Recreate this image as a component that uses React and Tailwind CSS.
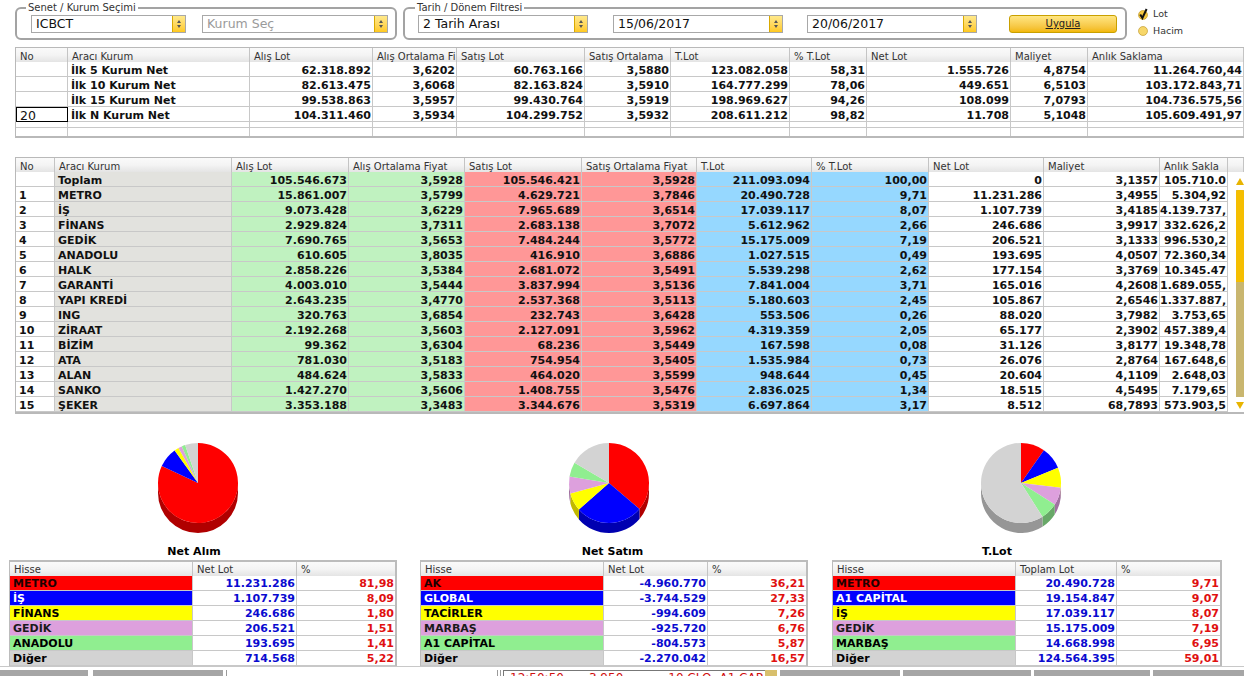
const HEAD_A = 'grid grid-cols-[52px_182px_123px_84px_128px_86px_119px_77px_144px_77px_156px]';
const HEAD_B = 'grid grid-cols-[39px_177px_117px_116px_117px_115px_115px_117px_115px_116px_68px_16px]';

const topCols = ['No', 'Aracı Kurum', 'Alış Lot', 'Alış Ortalama Fi', 'Satış Lot', 'Satış Ortalama', 'T.Lot', '% T.Lot', 'Net Lot', 'Maliyet', 'Anlık Saklama'];
const topRows = [
  ['', 'İlk 5 Kurum Net', '62.318.892', '3,6202', '60.763.166', '3,5880', '123.082.058', '58,31', '1.555.726', '4,8754', '11.264.760,44'],
  ['', 'İlk 10 Kurum Net', '82.613.475', '3,6068', '82.163.824', '3,5910', '164.777.299', '78,06', '449.651', '6,5103', '103.172.843,71'],
  ['', 'İlk 15 Kurum Net', '99.538.863', '3,5957', '99.430.764', '3,5919', '198.969.627', '94,26', '108.099', '7,0793', '104.736.575,56'],
  ['20', 'İlk N Kurum Net', '104.311.460', '3,5934', '104.299.752', '3,5932', '208.611.212', '98,82', '11.708', '5,1048', '105.609.491,97'],
];

const mainCols = ['No', 'Aracı Kurum', 'Alış Lot', 'Alış Ortalama Fiyat', 'Satış Lot', 'Satış Ortalama Fiyat', 'T.Lot', '% T.Lot', 'Net Lot', 'Maliyet', 'Anlık Sakla', ''];
const mainRows = [
  ['', 'Toplam', '105.546.673', '3,5928', '105.546.421', '3,5928', '211.093.094', '100,00', '0', '3,1357', '105.710.0'],
  ['1', 'METRO', '15.861.007', '3,5799', '4.629.721', '3,7846', '20.490.728', '9,71', '11.231.286', '3,4955', '5.304,92'],
  ['2', 'İŞ', '9.073.428', '3,6229', '7.965.689', '3,6514', '17.039.117', '8,07', '1.107.739', '3,4185', '4.139.737,'],
  ['3', 'FİNANS', '2.929.824', '3,7311', '2.683.138', '3,7072', '5.612.962', '2,66', '246.686', '3,9917', '332.626,2'],
  ['4', 'GEDİK', '7.690.765', '3,5653', '7.484.244', '3,5772', '15.175.009', '7,19', '206.521', '3,1333', '996.530,2'],
  ['5', 'ANADOLU', '610.605', '3,8035', '416.910', '3,6886', '1.027.515', '0,49', '193.695', '4,0507', '72.360,34'],
  ['6', 'HALK', '2.858.226', '3,5384', '2.681.072', '3,5491', '5.539.298', '2,62', '177.154', '3,3769', '10.345.47'],
  ['7', 'GARANTİ', '4.003.010', '3,5444', '3.837.994', '3,5136', '7.841.004', '3,71', '165.016', '4,2608', '1.689.055,'],
  ['8', 'YAPI KREDİ', '2.643.235', '3,4770', '2.537.368', '3,5113', '5.180.603', '2,45', '105.867', '2,6546', '1.337.887,'],
  ['9', 'ING', '320.763', '3,6854', '232.743', '3,6428', '553.506', '0,26', '88.020', '3,7982', '3.753,65'],
  ['10', 'ZİRAAT', '2.192.268', '3,5603', '2.127.091', '3,5962', '4.319.359', '2,05', '65.177', '2,3902', '457.389,4'],
  ['11', 'BİZİM', '99.362', '3,6304', '68.236', '3,5449', '167.598', '0,08', '31.126', '3,8177', '19.348,78'],
  ['12', 'ATA', '781.030', '3,5183', '754.954', '3,5405', '1.535.984', '0,73', '26.076', '2,8764', '167.648,6'],
  ['13', 'ALAN', '484.624', '3,5833', '464.020', '3,5599', '948.644', '0,45', '20.604', '4,1109', '2.648,03'],
  ['14', 'SANKO', '1.427.270', '3,5606', '1.408.755', '3,5476', '2.836.025', '1,34', '18.515', '4,5495', '7.179,65'],
  ['15', 'ŞEKER', '3.353.188', '3,3483', '3.344.676', '3,5319', '6.697.864', '3,17', '8.512', '68,7893', '573.903,5'],
];

const mainBg = ['', 'bg-[#e2e2de]', 'bg-[#c0f2c0]', 'bg-[#c0f2c0]', 'bg-[#ff9797]', 'bg-[#ff9797]', 'bg-[#96d8ff]', 'bg-[#96d8ff]', '', '', ''];

const swatches = [
  { bg: 'bg-[#ff0000]', text: 'text-[#1c0000]', top: '#ff0000', side: '#b00000' },
  { bg: 'bg-[#0000ff]', text: 'text-white', top: '#0000ff', side: '#0000b0' },
  { bg: 'bg-[#ffff00]', text: 'text-black', top: '#ffff00', side: '#c0b800' },
  { bg: 'bg-[#dda0dd]', text: 'text-[#1a1a1a]', top: '#dda0dd', side: '#a070a0' },
  { bg: 'bg-[#90ee90]', text: 'text-black', top: '#90ee90', side: '#68a868' },
  { bg: 'bg-[#d3d3d3]', text: 'text-black', top: '#d3d3d3', side: '#969696' },
];

const charts = [
  {
    title: 'Net Alım',
    lotHead: 'Net Lot',
    wrap: 'ml-[9px] w-[388px]',
    cols: 'grid-cols-[183px_104px_1fr]',
    titleBox: 'w-[370px]',
    rows: [
      ['METRO', '11.231.286', '81,98'],
      ['İŞ', '1.107.739', '8,09'],
      ['FİNANS', '246.686', '1,80'],
      ['GEDİK', '206.521', '1,51'],
      ['ANADOLU', '193.695', '1,41'],
      ['Diğer', '714.568', '5,22'],
    ],
  },
  {
    title: 'Net Satım',
    lotHead: 'Net Lot',
    wrap: 'ml-[23px] w-[388px]',
    cols: 'grid-cols-[183px_104px_1fr]',
    titleBox: 'w-[385px]',
    rows: [
      ['AK', '-4.960.770', '36,21'],
      ['GLOBAL', '-3.744.529', '27,33'],
      ['TACİRLER', '-994.609', '7,26'],
      ['MARBAŞ', '-925.720', '6,76'],
      ['A1 CAPİTAL', '-804.573', '5,87'],
      ['Diğer', '-2.270.042', '16,57'],
    ],
  },
  {
    title: 'T.Lot',
    lotHead: 'Toplam Lot',
    wrap: 'ml-[24px] w-[390px]',
    cols: 'grid-cols-[183px_101px_1fr]',
    titleBox: 'w-[330px]',
    rows: [
      ['METRO', '20.490.728', '9,71'],
      ['A1 CAPİTAL', '19.154.847', '9,07'],
      ['İŞ', '17.039.117', '8,07'],
      ['GEDİK', '15.175.009', '7,19'],
      ['MARBAŞ', '14.668.998', '6,95'],
      ['Diğer', '124.564.395', '59,01'],
    ],
  },
];

function point(cx, cy, r, deg) {
  const a = ((deg - 90) * Math.PI) / 180;
  return [cx + r * Math.cos(a), cy + r * Math.sin(a)];
}

function Pie({ values }) {
  const cx = 50;
  const cy = 41;
  const r = 40;
  const depth = 10;
  let from = 0;
  const slices = values.map((v, i) => {
    const to = from + v * 3.6;
    const s = { from, to, color: swatches[i] };
    from = to;
    return s;
  });

  return (
    <svg width="100" height="94" viewBox="0 0 100 94">
      {slices.map((s, i) => {
        // only the front half of the rim shows
        const a = Math.max(s.from, 90);
        const b = Math.min(s.to, 270);
        if (b <= a) return null;
        const [x1, y1] = point(cx, cy, r, a);
        const [x2, y2] = point(cx, cy, r, b);
        const d = `M${x1} ${y1}A${r} ${r} 0 0 1 ${x2} ${y2}L${x2} ${y2 + depth}A${r} ${r} 0 0 0 ${x1} ${y1 + depth}Z`;
        return <path key={i} d={d} fill={s.color.side} />;
      })}
      {slices.map((s, i) => {
        const [x1, y1] = point(cx, cy, r, s.from);
        const [x2, y2] = point(cx, cy, r, s.to);
        const large = s.to - s.from > 180 ? 1 : 0;
        return (
          <path
            key={i}
            d={`M${cx} ${cy}L${x1} ${y1}A${r} ${r} 0 ${large} 1 ${x2} ${y2}Z`}
            fill={s.color.top}
          />
        );
      })}
    </svg>
  );
}

function SelectBox({ value, muted, width }) {
  return (
    <div className={`flex h-[18px] border border-[#a8a8a8] bg-white ${width}`}>
      <div className={`flex-1 overflow-hidden whitespace-nowrap pl-[4px] text-[12.5px] leading-[16px] ${muted ? 'text-[#9a9a9a]' : 'text-[#111]'}`}>
        {value}
      </div>
      <div className="flex w-[13px] flex-col items-center justify-center gap-[2px] border-l border-[#d9a900] bg-gradient-to-b from-[#ffe98a] to-[#ffc91a]">
        <span className="h-0 w-0 border-x-[2.5px] border-b-[3px] border-x-transparent border-b-[#555]"></span>
        <span className="h-0 w-0 border-x-[2.5px] border-t-[3px] border-x-transparent border-t-[#555]"></span>
      </div>
    </div>
  );
}

function HeadCell({ children, last, leading = 'leading-[15px]' }) {
  return (
    <div className={`overflow-hidden whitespace-nowrap pl-[4px] text-[10px] text-[#333] ${leading} ${last ? '' : 'border-r border-[#c4c4c4]'}`}>
      {children}
    </div>
  );
}

function Cell({ children, left, bg, className = '', leading = 'leading-[15px]' }) {
  return (
    <div
      className={`h-[15px] overflow-hidden whitespace-nowrap border-r border-b border-[#c8c8c8] text-[11px] font-bold ${leading} ${left ? 'pl-[3px] text-left' : 'pr-[1px] text-right'} ${bg || ''} ${className}`}
    >
      {children}
    </div>
  );
}

const headBg = 'bg-gradient-to-b from-[#fafafa] via-[#f4f4f4] to-[#e4e4e4]';

function TopTable() {
  return (
    <div className="mt-[7px] ml-[15px] h-[91px] border-t border-b-2 border-l border-[#b9b9b9] bg-white">
      <div className={`${HEAD_A} h-[14px] ${headBg}`}>
        {topCols.map((c) => (
          <HeadCell key={c} leading="leading-[18px]">{c}</HeadCell>
        ))}
      </div>
      {topRows.map((row) => (
        <div key={row[1]} className={HEAD_A}>
          {row.map((v, i) =>
            i === 0 && v ? (
              <div key={i} className="h-[15px] border border-black pl-[3px] text-[12.5px] leading-[15px] text-[#111]">
                {v}
              </div>
            ) : (
              <Cell key={i} left={i < 2} leading="leading-[17px]" className="text-[#111]">
                {v}
              </Cell>
            )
          )}
        </div>
      ))}
      <div className={`${HEAD_A} h-[6px]`}>
        {topCols.map((c) => (
          <div key={c} className="border-r border-b border-[#c8c8c8]"></div>
        ))}
      </div>
      <div className={`${HEAD_A} h-[8px]`}>
        {topCols.map((c) => (
          <div key={c} className="border-r border-[#c8c8c8]"></div>
        ))}
      </div>
    </div>
  );
}

function MainTable() {
  return (
    <div className="mt-[19px] ml-[15px] h-[257px] border-t border-b-2 border-l border-[#b9b9b9] bg-white">
      <div className={`${HEAD_B} h-[14px] ${headBg}`}>
        {mainCols.map((c, i) => (
          <HeadCell key={i} leading="leading-[17px]">{c}</HeadCell>
        ))}
      </div>
      <div className="flex">
        <div className="w-[1212px]">
          {mainRows.map((row) => (
            <div key={row[1]} className="grid grid-cols-[39px_177px_117px_116px_117px_115px_115px_117px_115px_116px_68px]">
              {row.map((v, i) => (
                <Cell key={i} left={i < 2} bg={mainBg[i]} leading="leading-[17px]" className="text-[#111]">
                  {v}
                </Cell>
              ))}
            </div>
          ))}
        </div>
        <div className="ml-[8px] flex h-[240px] w-[8px] flex-col pt-[6px]">
          <span className="h-0 w-0 border-x-[4px] border-b-[7px] border-x-transparent border-b-[#e8b400]"></span>
          <div className="mt-[5px] flex flex-1 flex-col bg-[#c9b66f]">
            <div className="h-[92px] rounded-t-[2px] bg-[#f5be00]"></div>
          </div>
          <span className="mt-[5px] mb-[3px] h-0 w-0 border-x-[4px] border-t-[7px] border-x-transparent border-t-[#e8b400]"></span>
        </div>
      </div>
    </div>
  );
}

function ChartBlock({ chart }) {
  return (
    <div className={chart.wrap}>
      <div className="flex h-[131px] w-[378px] justify-center pt-[28px]">
        <Pie values={chart.rows.map((r) => parseFloat(r[2].replace(',', '.')))} />
      </div>
      <div className={`${chart.titleBox} text-center text-[11px] leading-[14px] font-bold text-black`}>{chart.title}</div>
      <div className="mt-[1px] border-t-2 border-r-2 border-l border-[#bcbcbc] bg-white">
        <div className={`grid ${chart.cols} h-[14px] ${headBg}`}>
          <HeadCell>Hisse</HeadCell>
          <HeadCell>{chart.lotHead}</HeadCell>
          <HeadCell last>%</HeadCell>
        </div>
        {chart.rows.map((r, i) => (
          <div key={r[0]} className={`grid ${chart.cols}`}>
            <Cell left bg={swatches[i].bg} className={swatches[i].text}>
              {r[0]}
            </Cell>
            <Cell className="text-[#0a0ad0]">{r[1]}</Cell>
            <Cell className="border-r-0 text-[#e01010]">{r[2]}</Cell>
          </div>
        ))}
      </div>
    </div>
  );
}

function BottomBar() {
  return (
    <div className="flex h-[10px] items-stretch overflow-hidden border-t border-[#c8c8c8] pt-[3px]">
      <div className="w-[88px] bg-[#a6a6a6]"></div>
      <div className="ml-[5px] w-[130px] bg-[#a6a6a6]"></div>
      <div className="ml-[3px] w-[1px] bg-[#9a9a9a]"></div>
      <div className="w-[270px]"></div>
      <div className="w-[1px] bg-[#9a9a9a]"></div>
      <div className="ml-[2px] w-[1px] bg-[#9a9a9a]"></div>
      <div className="ml-[2px] flex w-[262px] overflow-hidden border-t border-l border-[#777] pt-[1px] text-[12px] leading-[13px] whitespace-nowrap text-[#d01010]">
        <span className="ml-[6px]">12:50:50</span>
        <span className="ml-[25px]">3.950</span>
        <span className="ml-[45px]">10 CLO</span>
        <span className="ml-[8px]">A1 CAP</span>
      </div>
      <div className="w-[12px] bg-[#d8bf6c]"></div>
      <div className="ml-[3px] w-[120px] bg-[#a6a6a6]"></div>
      <div className="ml-[3px] w-[128px] bg-[#a6a6a6]"></div>
      <div className="ml-[3px] w-[116px] bg-[#a6a6a6]"></div>
      <div className="ml-[3px] flex-1 bg-[#a6a6a6]"></div>
    </div>
  );
}

export default function App() {
  return (
    <div className="h-[676px] w-[1244px] overflow-hidden bg-white font-['DejaVu_Sans',sans-serif]">
      <div className="flex items-start pt-[1px] pl-[15px]">
        <fieldset className="h-[39px] w-[382px] rounded-[6px] border-2 border-[#a3a3a3] pl-[14px]">
          <legend className="-ml-[5px] px-[2px] text-[10px] leading-[14px] text-[#333]">Senet / Kurum Seçimi</legend>
          <div className="flex gap-[16px]">
            <SelectBox value="ICBCT" width="w-[155px]" />
            <SelectBox value="Kurum Seç" muted width="w-[186px]" />
          </div>
        </fieldset>
        <fieldset className="ml-[6px] h-[39px] w-[724px] rounded-[6px] border-2 border-[#a3a3a3] pl-[13px]">
          <legend className="-ml-[3px] px-[2px] text-[10px] leading-[14px] text-[#333]">Tarih / Dönem Filtresi</legend>
          <div className="flex items-start">
            <SelectBox value="2 Tarih Arası" width="w-[170px]" />
            <SelectBox value="15/06/2017" width="ml-[25px] w-[170px]" />
            <SelectBox value="20/06/2017" width="ml-[24px] w-[170px]" />
            <button className="ml-[32px] h-[18px] w-[108px] rounded-[3px] border border-[#c9a000] bg-gradient-to-b from-[#ffe680] to-[#f2b800] text-[10px] leading-[14px] text-[#222] underline">
              Uygula
            </button>
          </div>
        </fieldset>
        <div className="mt-[7px] ml-[11px] flex flex-col gap-[6px] text-[9.5px] leading-[10px] text-[#333]">
          <div className="flex items-center gap-[5px]">
            <svg width="10" height="12" viewBox="0 0 10 12">
              <circle cx="5" cy="7" r="4.5" fill="#f5c842" stroke="#b89020" strokeWidth="0.6" />
              <path d="M2.2 6.5 L4.4 10 L8.6 1" fill="none" stroke="#111" strokeWidth="2" />
            </svg>
            Lot
          </div>
          <div className="flex items-center gap-[5px]">
            <svg width="10" height="10" viewBox="0 0 10 10">
              <circle cx="5" cy="5" r="4.5" fill="#f7d76a" stroke="#b89020" strokeWidth="0.6" />
            </svg>
            Hacim
          </div>
        </div>
      </div>
      <TopTable />
      <MainTable />
      <div className="flex">
        {charts.map((c) => (
          <ChartBlock key={c.title} chart={c} />
        ))}
      </div>
      <BottomBar />
    </div>
  );
}
